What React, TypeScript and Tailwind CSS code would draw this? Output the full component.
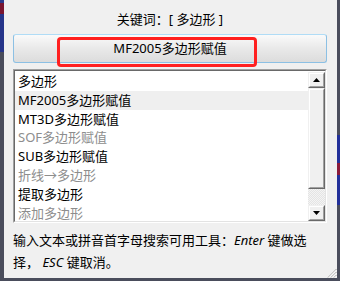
import React from "react";

const items: { text: string; disabled?: boolean; selected?: boolean }[] = [
  { text: "多边形" },
  { text: "MF2005多边形赋值", selected: true },
  { text: "MT3D多边形赋值" },
  { text: "SOF多边形赋值", disabled: true },
  { text: "SUB多边形赋值" },
  { text: "折线→多边形", disabled: true },
  { text: "提取多边形" },
  { text: "添加多边形", disabled: true },
];

const font = { fontFamily: '"Noto Sans", "Noto Sans CJK SC", sans-serif' };

function Arrow({ up }: { up?: boolean }) {
  return (
    <svg width="7" height="4" viewBox="0 0 7 4">
      {up ? <polygon points="3.5,0 7,4 0,4" fill="#000" /> : <polygon points="0,0 7,0 3.5,4" fill="#000" />}
    </svg>
  );
}

function Bevel({ className, children }: { className?: string; children?: React.ReactNode }) {
  return (
    <div className={`border border-t-[#f0f0f0] border-l-[#f0f0f0] border-r-[#696969] border-b-[#696969] ${className ?? ""}`}>
      <div className="h-full w-full border border-t-white border-l-white border-r-[#a0a0a0] border-b-[#a0a0a0] bg-[#f0f0f0] flex items-center justify-center">
        {children}
      </div>
    </div>
  );
}

export default function App() {
  return (
    <div className="w-[340px] h-[281px] flex bg-[#4a4d5c] overflow-hidden" style={font}>
      <div className="w-[4px] flex flex-col">
        <div className="h-[3px] bg-[#2a3a8c]" />
        <div className="h-[11px] bg-[#7a1530]" />
        <div className="h-[38px] bg-[#26358a]" />
        <div className="flex-1 bg-[#4a4d5c]" />
      </div>
      <div className="w-[333px] h-[278px] bg-[#f0f0f0] relative flex flex-col pl-[9px] pr-[10px]">
        <div className="h-[34px] pt-[10px] text-[13px] leading-[18px] text-center text-black">关键词：[ 多边形 ]</div>
        <div className="relative h-[29px] rounded-[3px] border border-[#8cc0e4] border-t-[#b0dcf6] bg-[linear-gradient(#fafafa,#e9e9e9_50%,#dcdcdc)] flex items-center justify-center text-[13px] text-black">
          MF2005多边形赋值
          <div className="absolute left-[43px] top-[2px] w-[200px] h-[30px] rounded-[4px] border-[3px] border-[#ff2020]" />
        </div>
        <div className="mt-[6px] h-[154px] border border-t-[#a0a0a0] border-l-[#a0a0a0] border-r-white border-b-white">
          <div className="h-full border border-t-[#696969] border-l-[#696969] border-r-[#e3e3e3] border-b-[#e3e3e3] bg-white flex">
            <div className="flex-1 pt-[1px]">
              {items.map((it) => (
                <div
                  key={it.text}
                  className={`h-[18.8px] pl-[3px] text-[13px] leading-[18.8px] whitespace-nowrap ${it.selected ? "bg-[#efefef]" : ""} ${it.disabled ? "text-[#8d8d8d]" : "text-black"}`}
                >
                  {it.text}
                </div>
              ))}
            </div>
            <div className="w-[17px] pt-[1px] flex flex-col">
              <Bevel className="h-[16px]">
                <Arrow up />
              </Bevel>
              <Bevel className="h-[101px]" />
              <div className="h-[16px] bg-[repeating-conic-gradient(#f4f4f4_0%_25%,#e4e4e4_0%_50%)] bg-[length:2px_2px]" />
              <Bevel className="h-[16px]">
                <Arrow />
              </Bevel>
            </div>
          </div>
        </div>
        <div className="mt-[6px] text-[13px] leading-[22px] text-black whitespace-nowrap">
          <div>
            输入文本或拼音首字母搜索可用工具：<i>Enter</i> 键做选
          </div>
          <div>
            择， <i>ESC</i> 键取消。
          </div>
        </div>
        <svg className="absolute right-0 bottom-0" width="11" height="11" viewBox="0 0 11 11">
          <g stroke="#a0a0a0" strokeWidth="1">
            <line x1="10.5" y1="2" x2="2" y2="10.5" />
            <line x1="10.5" y1="5" x2="5" y2="10.5" />
            <line x1="10.5" y1="8" x2="8" y2="10.5" />
          </g>
          <g stroke="#ffffff" strokeWidth="1">
            <line x1="10.5" y1="3" x2="3" y2="10.5" />
            <line x1="10.5" y1="6" x2="6" y2="10.5" />
            <line x1="10.5" y1="9" x2="9" y2="10.5" />
          </g>
        </svg>
      </div>
      <div className="w-[3px] flex flex-col">
        <div className="h-[135px] bg-[#4a4d5c]" />
        <div className="h-[28px] bg-[#22309a]" />
        <div className="h-[12px] bg-[#8a1a3a]" />
        <div className="h-[30px] bg-[#22309a]" />
        <div className="flex-1 bg-[#4a4d5c]" />
      </div>
    </div>
  );
}
